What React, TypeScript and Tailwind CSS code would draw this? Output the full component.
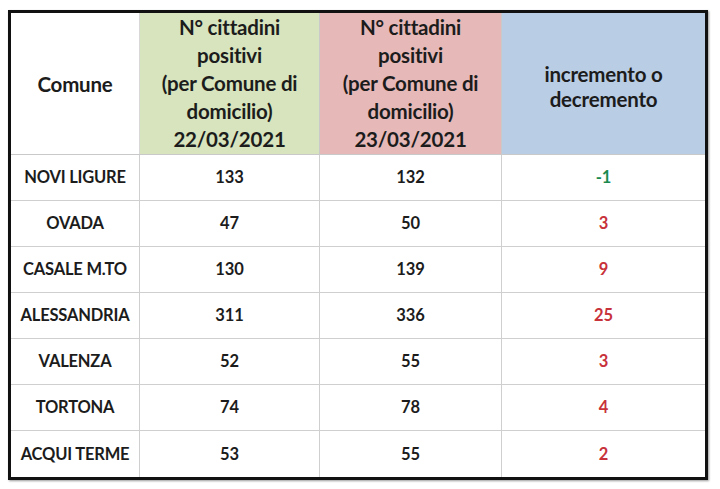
const rows = [
  { comune: "NOVI LIGURE", a: 133, b: 132, d: "-1" },
  { comune: "OVADA", a: 47, b: 50, d: "3" },
  { comune: "CASALE M.TO", a: 130, b: 139, d: "9" },
  { comune: "ALESSANDRIA", a: 311, b: 336, d: "25" },
  { comune: "VALENZA", a: 52, b: 55, d: "3" },
  { comune: "TORTONA", a: 74, b: 78, d: "4" },
  { comune: "ACQUI TERME", a: 53, b: 55, d: "2" },
];

const cols = "grid grid-cols-[129px_180px_182px_1fr]";

export default function App() {
  return (
    <div className="h-[489px] w-[720px] bg-white pl-[8px] pt-[10px] font-['Lato',_sans-serif] text-[#1c1c1c]">
      <div className="w-[700px] border-[3px] border-[#111] shadow-[1px_1px_2px_rgba(0,0,0,0.4)]">
        {/* Header */}
        <div className={`${cols} h-[142px] border-b border-[#c9c9c9] text-[20.5px] font-bold leading-[28px] tracking-[-0.2px]`}>
          <div className="flex items-center justify-center border-r border-[#d8d8d8]">Comune</div>
          <div className="flex flex-col items-center justify-end border-r border-[#c9c9c9] bg-[#d7e4bd] pb-[1px] text-center">
            <span>N° cittadini</span>
            <span>positivi</span>
            <span>(per Comune di</span>
            <span>domicilio)</span>
            <span>22/03/2021</span>
          </div>
          <div className="flex flex-col items-center justify-end border-r border-[#c9c9c9] bg-[#e6b9b8] pb-[1px] text-center">
            <span>N° cittadini</span>
            <span>positivi</span>
            <span>(per Comune di</span>
            <span>domicilio)</span>
            <span>23/03/2021</span>
          </div>
          <div className="flex flex-col items-center justify-center bg-[#b9cde5] pt-[6px] text-center leading-[25px]">
            <span>incremento o</span>
            <span>decremento</span>
          </div>
        </div>

        {/* Body */}
        {rows.map((r, i) => (
          <div
            key={r.comune}
            className={`${cols} h-[46px] text-[16.5px] font-bold ${i < rows.length - 1 ? "border-b border-[#cfcfcf]" : ""}`}
          >
            <div className="flex items-center justify-center border-r border-[#cfcfcf] tracking-[-0.2px]">{r.comune}</div>
            <div className="flex items-center justify-center border-r border-[#cfcfcf]">{r.a}</div>
            <div className="flex items-center justify-center border-r border-[#cfcfcf]">{r.b}</div>
            <div className={`flex items-center justify-center ${r.d.startsWith("-") ? "text-[#1a8a4f]" : "text-[#c8323a]"}`}>
              {r.d}
            </div>
          </div>
        ))}
      </div>
    </div>
  );
}
